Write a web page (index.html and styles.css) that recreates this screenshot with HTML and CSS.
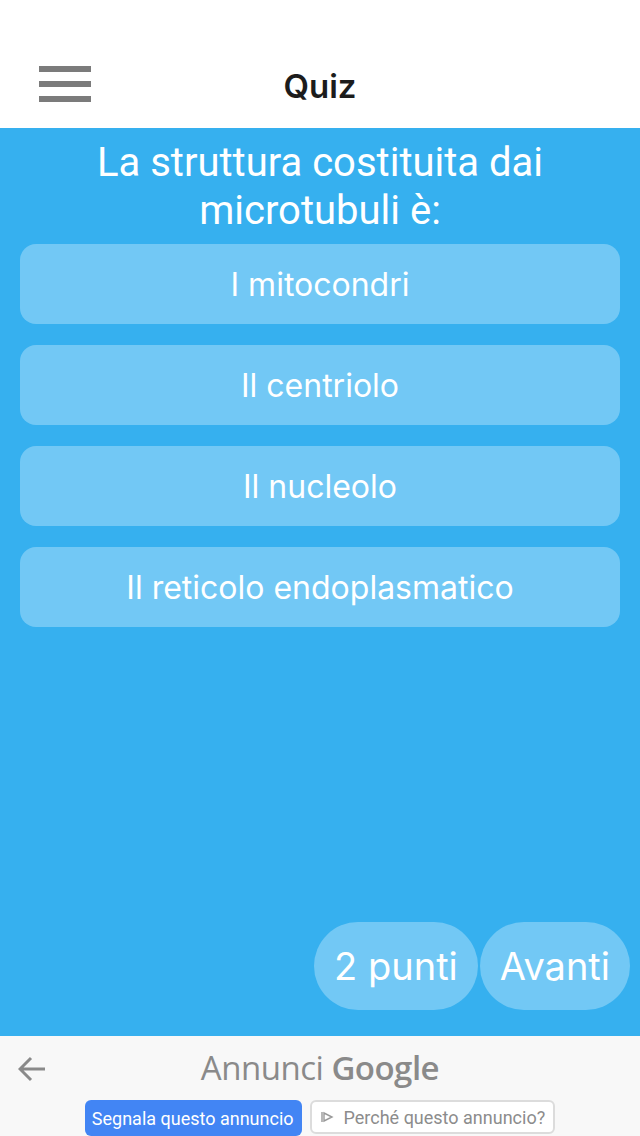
FILE: index.html
```html
<!DOCTYPE html>
<html lang="it">
<head>
<meta charset="utf-8">
<title>Quiz</title>
<link rel="stylesheet" href="styles.css">
</head>
<body>
<div class="app">
  <header class="topbar">
    <div class="menu" aria-label="menu">
      <span></span><span></span><span></span>
    </div>
    <h1 class="title">Quiz</h1>
  </header>
  <main class="quiz">
    <h2 class="question">La struttura costituita dai microtubuli è:</h2>
    <div class="options">
      <div class="option">I mitocondri</div>
      <div class="option">Il centriolo</div>
      <div class="option">Il nucleolo</div>
      <div class="option">Il reticolo endoplasmatico</div>
    </div>
    <div class="actions">
      <div class="pill">2 punti</div>
      <div class="pill">Avanti</div>
    </div>
  </main>
  <footer class="ad">
    <svg class="back" width="28" height="26" viewBox="0 0 28 26"><path d="M27 13H3M13 2L2 13l11 11" fill="none" stroke="#8a8a8a" stroke-width="3"/></svg>
    <div class="ad-title">Annunci <b>Google</b></div>
    <div class="ad-buttons">
      <div class="report">Segnala questo annuncio</div>
      <div class="why"><svg width="14" height="14" viewBox="0 0 14 14"><path d="M2 2v10M4 3l8 4-8 4z" fill="none" stroke="#999" stroke-width="1.4"/></svg>Perché questo annuncio?</div>
    </div>
  </footer>
</div>
</body>
</html>
```
FILE: styles.css
```css
* { box-sizing: border-box; margin: 0; padding: 0; }
html, body { width: 640px; height: 1136px; overflow: hidden; }
body { background: #36b0ef; font-family: Inter, "Open Sans", sans-serif; }
.app { display: flex; flex-direction: column; height: 1136px; }
.topbar {
  height: 128px; background: #fff; position: relative;
  display: flex; align-items: flex-end; justify-content: center; padding-bottom: 22px;
}
.menu { position: absolute; left: 39px; top: 66px; width: 52px; display: flex; flex-direction: column; gap: 9px; }
.menu span { display: block; height: 6px; background: #7b7b7b; }
.title { font-family: Inter, sans-serif; font-weight: 600; font-size: 33px; color: #1c1c1c; line-height: 40px; }
.quiz { flex: 1; display: flex; flex-direction: column; padding: 11px 20px 26px; }
.question {
  font-family: Roboto, sans-serif; font-weight: 400; font-size: 40px; line-height: 48px;
  color: #fff; text-align: center; padding: 0 70px; margin-bottom: 9px;
}
.options { display: flex; flex-direction: column; gap: 21px; }
.option {
  height: 80px; border-radius: 16px; background: #72c8f5; color: #fff;
  display: flex; align-items: center; justify-content: center; font-size: 32px; font-weight: 400;
}
.actions { margin-top: auto; display: flex; justify-content: flex-end; gap: 2px; margin-right: -10px; }
.pill {
  height: 88px; border-radius: 44px; background: #72c8f5; color: #fff; font-size: 38px;
  display: flex; align-items: center; justify-content: center; padding: 0 20px;
}
.ad { height: 100px; background: #f8f8f8; position: relative; display: flex; flex-direction: column; align-items: center; }
.back { position: absolute; left: 18px; top: 20px; }
.ad-title { font-family: "Open Sans", sans-serif; font-size: 33px; color: #8a8a8a; line-height: 42px; margin-top: 11px; letter-spacing: -0.5px; }
.ad-title b { font-weight: 600; }
.ad-buttons { display: flex; gap: 8px; margin-top: 11px; margin-left: 0; }
.report {
  background: #4285f4; color: #fff; font-family: Roboto, sans-serif; font-size: 18px;
  height: 36px; padding: 0 8px 0 7px; border-radius: 6px; display: flex; align-items: center;
}
.why {
  border: 2px solid #dcdcdc; color: #8c8c8c; font-family: Roboto, sans-serif; font-size: 18px;
  height: 34px; padding: 0 8px; border-radius: 6px; display: flex; align-items: center; gap: 10px; background: #fff;
}
```
